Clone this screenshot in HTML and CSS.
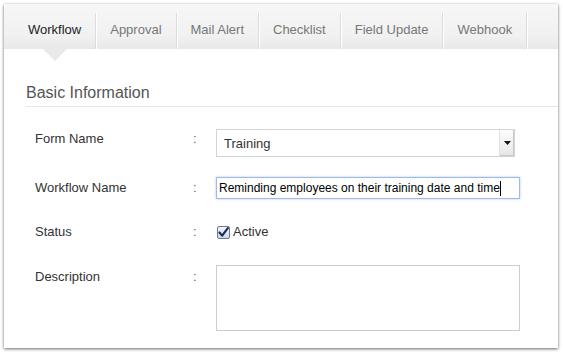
FILE: index.html
```html
<!DOCTYPE html>
<html lang="en">
<head>
    <meta charset="UTF-8">
    <title>Workflow</title>
    <link rel="stylesheet" href="styles.css">
</head>
<body>
    <div class="panel">
        <div class="tab-bar">
            <div class="tab active">Workflow</div>
            <div class="tab">Approval</div>
            <div class="tab">Mail Alert</div>
            <div class="tab">Checklist</div>
            <div class="tab">Field Update</div>
            <div class="tab">Webhook</div>
        </div>
        <div class="section-title">Basic Information</div>
        <div class="form">
            <div class="form-row">
                <div class="form-label">Form Name</div>
                <div class="colon">:</div>
                <div class="select-box">
                    <span class="select-value">Training</span>
                    <span class="select-arrow">
                        <svg width="7" height="4" viewBox="0 0 7 4"><path d="M0 0H7L3.5 4Z" fill="#111"/></svg>
                    </span>
                </div>
            </div>
            <div class="form-row row-text">
                <div class="form-label">Workflow Name</div>
                <div class="colon">:</div>
                <div class="text-input">Reminding employees on their training date and time<span class="caret"></span></div>
            </div>
            <div class="form-row row-check">
                <div class="form-label">Status</div>
                <div class="colon">:</div>
                <label class="check-field">
                    <span class="check-box">
                        <svg width="11" height="11" viewBox="0 0 11 11"><path d="M1.5 5.5L4.2 8.6L9.8 1.2" fill="none" stroke="#1b2a55" stroke-width="2.2" stroke-linecap="round" stroke-linejoin="round"/></svg>
                    </span>
                    Active
                </label>
            </div>
            <div class="form-row row-area">
                <div class="form-label">Description</div>
                <div class="colon">:</div>
                <div class="text-area"></div>
            </div>
        </div>
    </div>
</body>
</html>
```

FILE: styles.css
```css
body {
    margin: 0;
    padding: 4px;
    background-color: #fff;
    font-family: "Liberation Sans", Arial, sans-serif;
    font-size: 13px;
    color: #333;
}
.panel {
    width: 554px;
    height: 344px;
    background-color: #fff;
    box-shadow: 0 1px 3px rgba(0, 0, 0, 0.6);
    overflow: hidden;
}
.tab-bar {
    display: flex;
    height: 45px;
    padding-left: 10px;
    background: linear-gradient(#f7f7f7, #f1f1f1 70%, #e8e8e8);
}
.tab {
    position: relative;
    display: flex;
    align-items: center;
    margin-top: 9px;
    padding: 0 14px 4px;
    border-right: 1px solid #dcdcdc;
    box-shadow: 1px 0 0 #fff;
    color: #777;
}
.tab.active {
    color: #222;
}
.tab.active::after {
    content: "";
    position: absolute;
    left: 50%;
    bottom: -12px;
    margin-left: -12px;
    border-top: 12px solid #e9e9e9;
    border-left: 12px solid transparent;
    border-right: 12px solid transparent;
}
.section-title {
    margin: 34px 0 0 22px;
    padding-bottom: 3px;
    border-bottom: 1px solid #e6e6e6;
    font-size: 16px;
    line-height: 20px;
    color: #555;
}
.form {
    display: flex;
    flex-direction: column;
    gap: 20px;
    padding: 22px 0 0 31px;
}
.form-row {
    display: flex;
    align-items: flex-start;
}
.form-label {
    width: 158px;
    line-height: 20px;
    color: #333;
}
.colon {
    width: 23px;
    line-height: 20px;
    color: #666;
}
.row-text .form-label, .row-text .colon {
    padding-top: 1px;
}
.row-check .form-label, .row-check .colon {
    padding-top: 3px;
}
.row-area .form-label, .row-area .colon {
    padding-top: 5px;
}
.select-box {
    display: flex;
    align-items: center;
    width: 297px;
    height: 26px;
    border: 1px solid #d4d4d4;
    background-color: #fff;
}
.select-value {
    flex: 1;
    padding-left: 7px;
    color: #333;
}
.select-arrow {
    display: flex;
    align-items: center;
    justify-content: center;
    width: 14px;
    height: 26px;
    border-left: 1px solid #e2e2e2;
    background: linear-gradient(#fdfdfd, #e6e6e6);
    box-shadow: inset -1px -1px 0 #c8c8c8;
}
.text-input {
    display: flex;
    align-items: center;
    width: 300px;
    height: 20px;
    padding-left: 2px;
    border: 1px solid #9dbbe3;
    box-shadow: 0 0 2px rgba(90, 140, 220, 0.5);
    font-size: 12px;
    color: #000;
    white-space: nowrap;
}
.caret {
    display: inline-block;
    width: 1px;
    height: 15px;
    background-color: #000;
}
.check-field {
    display: flex;
    align-items: center;
    gap: 3px;
    margin-top: 3px;
    line-height: 20px;
    color: #333;
}
.check-box {
    display: flex;
    align-items: center;
    justify-content: center;
    width: 11px;
    height: 11px;
    margin-left: 1px;
    border: 1px solid #6b7a94;
    border-radius: 2px;
    background: linear-gradient(#f4f8fd, #c9d7ec);
}
.text-area {
    width: 302px;
    height: 64px;
    margin-top: 3px;
    border: 1px solid #c6cedb;
}
```
